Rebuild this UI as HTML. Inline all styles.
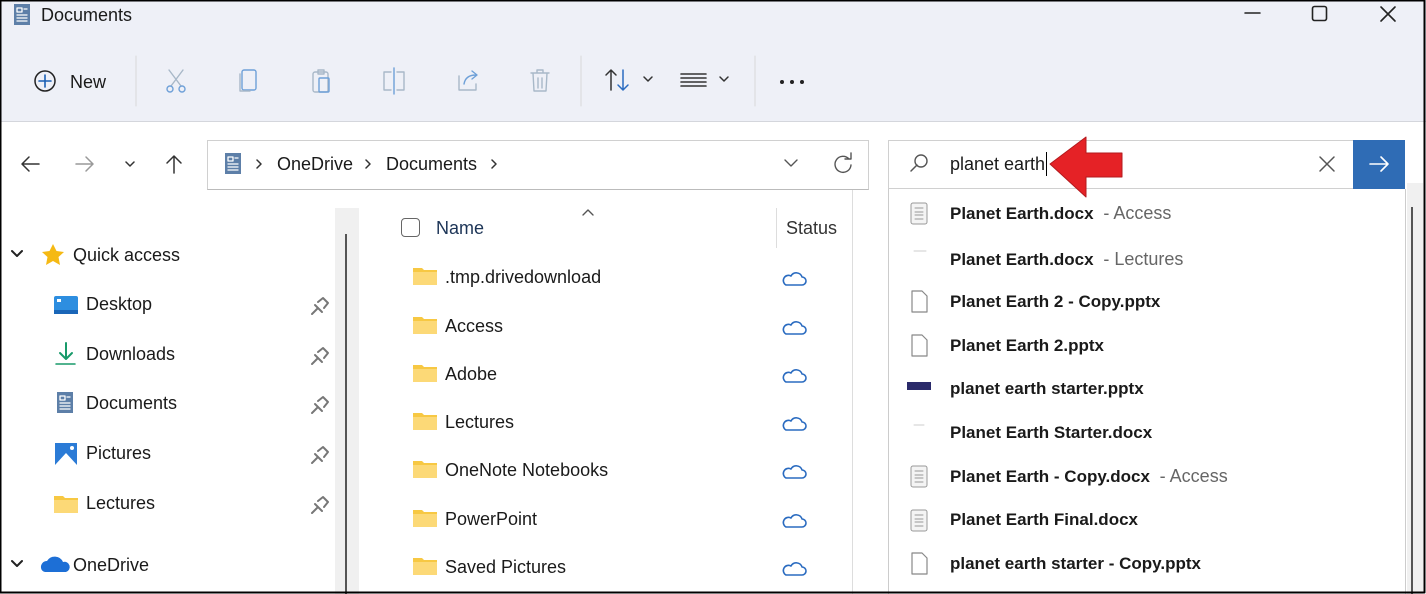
<!DOCTYPE html>
<html><head><meta charset="utf-8"><style>
*{margin:0;padding:0;box-sizing:border-box}
body{width:1426px;height:594px;overflow:hidden;background:#fff;font-family:"Liberation Sans",sans-serif;color:#1a1a1a;position:relative}
.a{position:absolute;white-space:nowrap}
.t{font-size:18px;line-height:20px}
.b{font-weight:bold;font-size:17px;line-height:20px}
.g{color:#666;font-weight:normal;font-size:18px}
</style></head><body>
<div class="a" style="left:0;top:0;width:1426px;height:122px;background:#eef0f7;border-bottom:1px solid #d4d6dc"></div>
<div class="a t" style="left:41px;top:5px">Documents</div>
<div class="a t" style="left:70px;top:72px">New</div>
<div class="a t" style="left:277px;top:154px">OneDrive</div>
<div class="a t" style="left:386px;top:154px">Documents</div>
<div class="a" style="left:207px;top:140px;width:662px;height:50px;border:1px solid #d0d0d0;border-bottom-color:#bbb"></div>
<div class="a" style="left:888px;top:140px;width:466px;height:49px;border:1px solid #d0d0d0;border-right:none"></div>
<div class="a" style="left:1353px;top:140px;width:52px;height:49px;background:#2f6cb5"></div>
<div class="a t" style="left:950px;top:154px">planet earth</div>
<div class="a" style="left:1046px;top:152px;width:1px;height:24px;background:#000"></div>
<div class="a" style="left:888px;top:189px;width:518px;height:405px;border-left:1px solid #ccc;border-right:1px solid #ccc"></div>
<div class="a" style="left:1407px;top:183px;width:16px;height:411px;background:#f0f0f0"></div>
<div class="a" style="left:1411px;top:207px;width:2px;height:387px;background:#555"></div>
<div class="a" style="left:335px;top:208px;width:24px;height:386px;background:#f0f0f0"></div>
<div class="a" style="left:345px;top:234px;width:2px;height:360px;background:#555"></div>
<div class="a" style="left:852px;top:190px;width:1px;height:404px;background:#ddd"></div>
<div class="a" style="left:776px;top:208px;width:1px;height:40px;background:#ddd"></div>
<div class="a t" style="left:436px;top:218px;color:#1d3557">Name</div>
<div class="a t" style="left:786px;top:218px;color:#333">Status</div>
<div class="a" style="left:401px;top:218px;width:19px;height:19px;border:1.5px solid #666;border-radius:4px"></div>
<div class="a t" style="left:73px;top:245px">Quick access</div>
<div class="a t" style="left:86px;top:294px">Desktop</div>
<div class="a t" style="left:86px;top:344px">Downloads</div>
<div class="a t" style="left:86px;top:393px">Documents</div>
<div class="a t" style="left:86px;top:443px">Pictures</div>
<div class="a t" style="left:86px;top:493px">Lectures</div>
<div class="a t" style="left:73px;top:555px">OneDrive</div>
<div class="a t" style="left:445px;top:267px">.tmp.drivedownload</div>
<div class="a t" style="left:445px;top:316px">Access</div>
<div class="a t" style="left:445px;top:364px">Adobe</div>
<div class="a t" style="left:445px;top:412px">Lectures</div>
<div class="a t" style="left:445px;top:460px">OneNote Notebooks</div>
<div class="a t" style="left:445px;top:509px">PowerPoint</div>
<div class="a t" style="left:445px;top:557px">Saved Pictures</div>
<div class="a b" style="left:950px;top:203px">Planet Earth.docx <span class="g">&nbsp;- Access</span></div>
<div class="a b" style="left:950px;top:249px">Planet Earth.docx <span class="g">&nbsp;- Lectures</span></div>
<div class="a b" style="left:950px;top:292px">Planet Earth 2 - Copy.pptx</div>
<div class="a b" style="left:950px;top:336px">Planet Earth 2.pptx</div>
<div class="a b" style="left:950px;top:379px">planet earth starter.pptx</div>
<div class="a b" style="left:950px;top:423px">Planet Earth Starter.docx</div>
<div class="a b" style="left:950px;top:466px">Planet Earth - Copy.docx <span class="g">&nbsp;- Access</span></div>
<div class="a b" style="left:950px;top:510px">Planet Earth Final.docx</div>
<div class="a b" style="left:950px;top:554px">planet earth starter - Copy.pptx</div>
<svg class="a" style="left:0;top:0" width="1426" height="594" fill="none" stroke-linecap="round" stroke-linejoin="round">
<defs>
<g id="fold"><path d="M0 4h9l2 2h13v15H0z" fill="#f7c843"/><path d="M0 8h24v13H0z" fill="#fcd977"/></g>
<g id="cloud"><path d="M-9 5h16a4 4 0 0 0 0-8a6 6 0 0 0-11-1a5 5 0 0 0-5 9z" stroke="#2a6bc0" stroke-width="1.6"/></g>
<g id="pin"><path d="M-3 6l-5 5M-5 2l7 7M-2 -1l5-4 5 5-4 5" stroke="#777" stroke-width="2"/></g>
<g id="docx"><rect x="0" y="0" width="16" height="21" rx="2" fill="#f4f4f4" stroke="#999"/><path d="M4 5h8M4 9h8M4 12h8M4 16h8" stroke="#999"/></g>
<g id="page"><path d="M1 0h10l5 5v16H1z" stroke="#888" stroke-width="1.2" fill="#fff"/></g>
<g id="docic"><rect x="0" y="0" width="16" height="21" fill="#5d7fa8"/><path d="M3 4h5v4H3zM10 5h3M3 11h10M3 14h10M3 17h10" stroke="#fff" stroke-width="1.3"/></g>
</defs>
<rect x="0.5" y="0.5" width="1424" height="592" stroke="#000" stroke-width="2"/>
<use href="#docic" x="14" y="4"/>
<path d="M1245 13h15" stroke="#222" stroke-width="1.5"/>
<rect x="1312.5" y="6.5" width="14" height="14" rx="2" stroke="#222" stroke-width="1.6"/>
<path d="M1381 7l14 14M1395 7l-14 14" stroke="#222" stroke-width="1.6"/>
<circle cx="45" cy="81" r="10" stroke="#222" stroke-width="1.5"/><path d="M45 75v12M39 81h12" stroke="#1a5fb4" stroke-width="1.6"/>
<path d="M136 56v50M581 56v50M755 56v50" stroke="#d8d8d8"/>
<g stroke="#a8b8c8" stroke-width="1.4">
<path d="M169 70l12 16M183 70l-12 16"/><circle cx="170" cy="89" r="3" stroke="#6ea0d8"/><circle cx="182" cy="89" r="3" stroke="#6ea0d8"/>
<rect x="242" y="70" width="14" height="20" rx="2" stroke="#6ea0d8"/><path d="M240 74v17h10"/>
<rect x="313" y="72" width="15" height="20" rx="2"/><rect x="319" y="78" width="10" height="14" rx="1" stroke="#6ea0d8"/><path d="M318 70h6v4h-6z"/>
<path d="M391 72h-7v18h7M397 72h7v18h-7"/><path d="M394 68v26" stroke="#6ea0d8"/>
<path d="M459 76v14h17v-6"/><path d="M464 84c1-6 5-9 12-9M472 71l5 4-5 4" stroke="#6ea0d8"/>
<path d="M531 73h18M537 73v-3h6v3M533 73l1 18h12l1-18M538 78v10M542 78v10"/>
</g>
<path d="M611 70v20M606 75l5-5 5 5" stroke="#333" stroke-width="1.5"/>
<path d="M623 70v20M618 85l5 5 5-5" stroke="#2a6bc0" stroke-width="1.5"/>
<path d="M644 77l4 4 4-4M720 77l4 4 4-4" stroke="#333" stroke-width="1.5"/>
<path d="M681 74h25M681 78h25M681 82h25M681 86h25" stroke="#333" stroke-width="1.6"/>
<g fill="#222"><circle cx="782" cy="82" r="2"/><circle cx="792" cy="82" r="2"/><circle cx="802" cy="82" r="2"/></g>
<path d="M39 164h-17M29 157l-7 7 7 7" stroke="#333" stroke-width="1.5"/>
<path d="M76 164h17M86 157l7 7-7 7" stroke="#999" stroke-width="1.5"/>
<path d="M126 162l4 4 4-4" stroke="#333" stroke-width="1.5"/>
<path d="M174 173v-17M167 163l7-7 7 7" stroke="#333" stroke-width="1.5"/>
<use href="#docic" x="225" y="153"/>
<path d="M257 160l4 4-4 4M366 160l4 4-4 4M492 160l4 4-4 4" stroke="#333" stroke-width="1.5"/>
<path d="M785 160l6 6 6-6" stroke="#555" stroke-width="1.4"/>
<path d="M849 159a8 8 0 1 0 2 6M851 153v6h-6" stroke="#555" stroke-width="1.4"/>
<circle cx="921" cy="161" r="6" stroke="#555" stroke-width="1.4"/><path d="M917 165l-6 6" stroke="#555" stroke-width="1.5"/>
<path d="M1320 157l14 14M1334 157l-14 14" stroke="#555" stroke-width="1.5"/>
<path d="M1370 164h17M1381 157l7 7-7 7" stroke="#fff" stroke-width="1.6"/>
<path d="M1050 164l36-27v16h36v24h-36v20z" fill="#e52226" stroke="#b31a1d" stroke-width="1"/>
<path d="M583 215l5-5 5 5" stroke="#555" stroke-width="1.4"/>
<path d="M12 251l5 5 5-5M12 561l5 5 5-5" stroke="#222" stroke-width="2"/>
<path d="M53 244l3.5 7 7.5 1-5.5 5 1.5 8-7-4-7 4 1.5-8-5.5-5 7.5-1z" fill="#f5b914"/>
<path d="M41 568a6 6 0 0 1 6-7a9 9 0 0 1 16 1a5 5 0 0 1 3 10H45a5 5 0 0 1-4-4z" fill="#1d6fd6"/>
<rect x="54" y="296" width="24" height="18" rx="2" fill="#2d8ee0"/><rect x="54" y="310" width="24" height="4" fill="#1a66b8"/><rect x="57" y="299" width="4" height="3" fill="#fff"/>
<path d="M66 343v16M60 353l6 6 6-6" stroke="#189a6a" stroke-width="2"/><path d="M56 364h19" stroke="#189a6a" stroke-width="1.5"/>
<use href="#docic" x="57" y="392"/>
<rect x="55" y="443" width="22" height="22" fill="#2b7bd6"/><path d="M55 465l11-12 11 12z" fill="#fff"/><circle cx="72" cy="448" r="2" fill="#fff"/>
<use href="#fold" x="54" y="492"/>
<use href="#pin" x="320" y="303"/><use href="#pin" x="320" y="353"/><use href="#pin" x="320" y="402"/><use href="#pin" x="320" y="452"/><use href="#pin" x="320" y="502"/>
<use href="#fold" x="413" y="264"/><use href="#fold" x="413" y="313"/><use href="#fold" x="413" y="361"/><use href="#fold" x="413" y="409"/><use href="#fold" x="413" y="457"/><use href="#fold" x="413" y="506"/><use href="#fold" x="413" y="554"/>
<use href="#cloud" x="795" y="280"/><use href="#cloud" x="795" y="329"/><use href="#cloud" x="795" y="377"/><use href="#cloud" x="795" y="425"/><use href="#cloud" x="795" y="473"/><use href="#cloud" x="795" y="522"/><use href="#cloud" x="795" y="570"/>
<use href="#docx" x="911" y="203"/>
<path d="M914 251h12" stroke="#ccc"/>
<use href="#page" x="911" y="291"/><use href="#page" x="911" y="335"/>
<rect x="907" y="382" width="24" height="8" fill="#2a2a6a"/>
<path d="M914 425h10" stroke="#ccc"/>
<use href="#docx" x="911" y="466"/><use href="#docx" x="911" y="510"/>
<use href="#page" x="911" y="553"/>
</svg>
</body></html>
